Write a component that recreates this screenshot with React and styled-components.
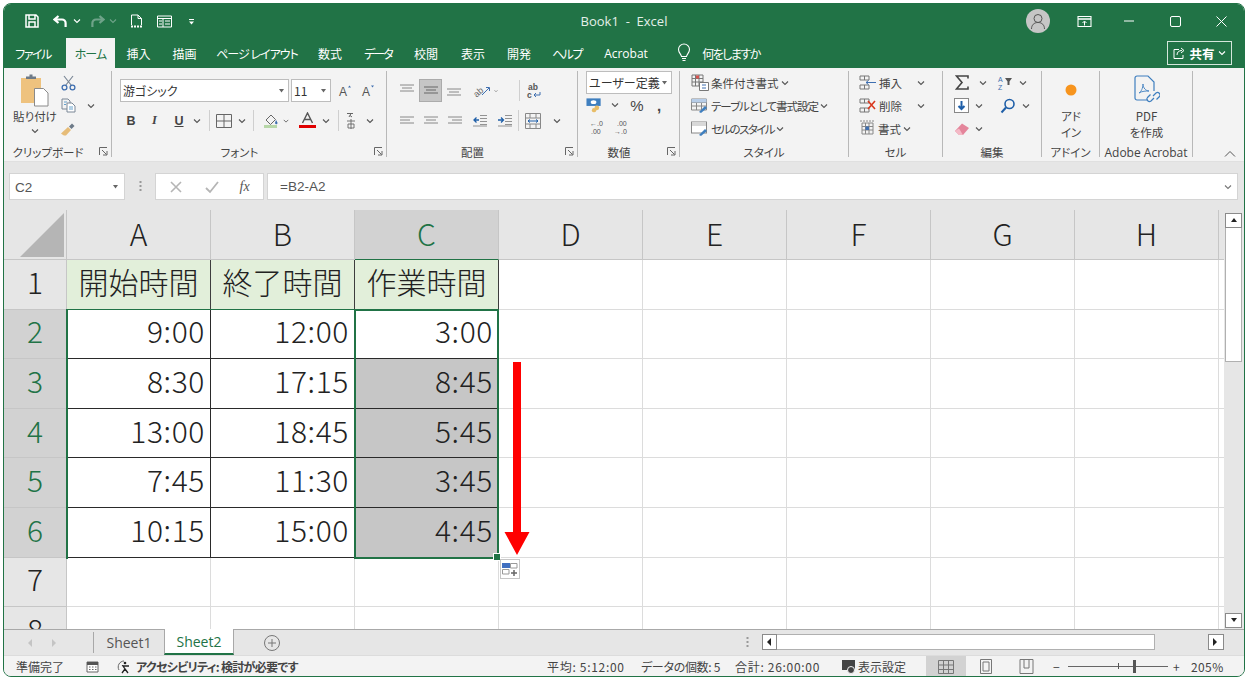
import { Fragment } from "react"
import styled, { createGlobalStyle } from "styled-components"

const GlobalStyle = createGlobalStyle`
  html, body { margin: 0; padding: 0; background: #fff; }
  * { box-sizing: border-box; }
  body { font-family: "Noto Sans CJK JP", "Noto Sans", sans-serif; font-feature-settings: "palt"; }
`

const Window = styled.div`
  width: 1242px;
  height: 674px;
  margin: 3px 0 0 3px;
  border: 1px solid #217346;
  border-radius: 8px;
  overflow: hidden;
  display: flex;
  flex-direction: column;
  background: #e6e6e6;
`

/* タイトルバー */
const TitleBar = styled.div`
  height: 34px;
  flex: none;
  background: #217346;
  color: #fff;
  display: flex;
  align-items: center;
  position: relative;
`
const Slot = styled.div`
  width: ${(p) => p.$w}px;
  flex: none;
  display: flex;
  align-items: center;
  justify-content: center;
`
const Title = styled.div`
  position: absolute;
  left: 0;
  right: 0;
  text-align: center;
  font-family: "Open Sans", sans-serif;
  font-size: 13px;
  color: #e4efe9;
  white-space: pre;
`
const Avatar = styled.div`
  width: 24px;
  height: 24px;
  border-radius: 50%;
  background: #c6c6c6;
  flex: none;
  display: flex;
  align-items: center;
  justify-content: center;
`

/* タブ */
const TabBar = styled.div`
  height: 30px;
  flex: none;
  background: #217346;
  display: flex;
  align-items: stretch;
`
const Tab = styled.div`
  width: ${(p) => p.$w}px;
  padding-right: ${(p) => p.$pr || 0}px;
  flex: none;
  display: flex;
  align-items: center;
  justify-content: center;
  font-size: 12px;
  letter-spacing: ${(p) => p.$ls || 0}px;
  white-space: nowrap;
  color: ${(p) => (p.$active ? "#217346" : "#fff")};
  background: ${(p) => (p.$active ? "#f3f3f3" : "transparent")};
  font-family: ${(p) => (p.$latin ? '"Open Sans", sans-serif' : "inherit")};
`
const Share = styled.div`
  width: 65px;
  height: 24px;
  margin: 3px 12px 0 auto;
  border: 1px solid #d5e6dc;
  display: flex;
  align-items: center;
  justify-content: center;
  gap: 3px;
  color: #fff;
  font-size: 12.5px;
  font-weight: 700;
`

/* リボン */
const Ribbon = styled.div`
  height: 94px;
  flex: none;
  background: #f3f3f3;
  display: flex;
  position: relative;
  padding-top: 3px;
  color: #444;
  border-bottom: 1px solid #e0e0e0;
`
const Group = styled.div`
  width: ${(p) => p.$w}px;
  flex: none;
  height: 86px;
  border-right: 1px solid #b8b8b8;
  display: flex;
  flex-direction: column;
  position: relative;
`
const GroupBody = styled.div`
  height: 73px;
  flex: none;
  padding-left: ${(p) => p.$pl || 0}px;
  display: flex;
  flex-direction: ${(p) => (p.$row ? "row" : "column")};
`
const GroupLabel = styled.div`
  flex: 1;
  display: flex;
  align-items: center;
  justify-content: center;
  font-size: ${(p) => (p.$latin ? 12 : 11.5)}px;
  color: #444;
  white-space: nowrap;
  padding-right: ${(p) => p.$pr || 0}px;
  font-family: ${(p) => (p.$latin ? '"Open Sans", sans-serif' : "inherit")};
`
const Launcher = styled.svg`
  position: absolute;
  right: 3px;
  bottom: 1px;
`
const Row = styled.div`
  height: ${(p) => p.$h || 23}px;
  margin-top: ${(p) => p.$mt || 0}px;
  display: flex;
  align-items: center;
  flex: none;
`
const Col = styled.div`
  display: flex;
  flex-direction: column;
  align-items: center;
  width: ${(p) => p.$w}px;
  flex: none;
`
const Combo = styled.div`
  width: ${(p) => p.$w}px;
  height: ${(p) => p.$h || 23}px;
  flex: none;
  margin-right: ${(p) => p.$mr || 0}px;
  background: #fff;
  border: 1px solid #bdbdbd;
  display: flex;
  align-items: center;
  justify-content: space-between;
  padding: 0 3px 0 2px;
  font-size: 12px;
  color: #333;
  white-space: nowrap;
`
const Selected = styled.div`
  width: 23px;
  height: 23px;
  flex: none;
  background: #c6c6c6;
  border: 1px solid #ababab;
  display: flex;
  align-items: center;
  justify-content: center;
`
const VSep = styled.div`
  width: 1px;
  height: 21px;
  background: #cfcfcf;
  flex: none;
`
const Cmd = styled.div`
  display: flex;
  align-items: center;
  gap: 2px;
  font-size: 11.5px;
  letter-spacing: ${(p) => p.$ls || 0}px;
  color: #444;
  white-space: nowrap;
`
const Big = styled.div`
  font-size: 11.5px;
  line-height: 16px;
  text-align: center;
  color: #444;
  white-space: nowrap;
`
const Letter = styled.span`
  font-family: ${(p) => (p.$serif ? '"Liberation Serif", serif' : '"Liberation Sans", sans-serif')};
  font-weight: 700;
  font-style: ${(p) => (p.$serif ? "italic" : "normal")};
  text-decoration: ${(p) => (p.$under ? "underline" : "none")};
  font-size: 12.5px;
  color: #444;
`
const Percent = styled.span`
  font-family: "Liberation Sans", sans-serif;
  font-size: 15px;
  font-weight: ${(p) => p.$b || 400};
  color: #444;
`
const Collapse = styled.svg`
  position: absolute;
  right: 8px;
  bottom: 3px;
`

/* 数式バー */
const FormulaArea = styled.div`
  height: 48px;
  flex: none;
  background: #e6e6e6;
  display: flex;
  align-items: flex-start;
  padding: 11px 6px 0 5px;
`
const NameBox = styled.div`
  width: 116px;
  height: 27px;
  flex: none;
  background: #fff;
  border: 1px solid #d4d4d4;
  display: flex;
  align-items: center;
  justify-content: space-between;
  padding: 1px 5px 0 5px;
  font-family: "Liberation Sans", sans-serif;
  font-size: 13.5px;
  color: #555;
`
const GripWrap = styled.div`
  width: 30px;
  height: 27px;
  flex: none;
  display: flex;
  align-items: center;
  justify-content: center;
`
const FxBox = styled.div`
  width: 109px;
  height: 27px;
  flex: none;
  margin-right: 3px;
  background: #fff;
  border: 1px solid #d4d4d4;
  display: flex;
  align-items: center;
  justify-content: space-around;
  padding: 0 3px;
`
const Fx = styled.span`
  font-family: "Liberation Serif", serif;
  font-style: italic;
  font-size: 14px;
  color: #555;
`
const FormulaInput = styled.div`
  flex: 1;
  height: 27px;
  background: #fff;
  border: 1px solid #d4d4d4;
  display: flex;
  align-items: center;
  justify-content: space-between;
  padding: 0 5px 0 12px;
  font-family: "Liberation Sans", sans-serif;
  font-size: 13.5px;
  color: #555;
`

/* シート */
const SheetArea = styled.div`
  height: 419px;
  flex: none;
  display: flex;
  background: #fff;
`
const Sheet = styled.div`
  width: 1220px;
  flex: none;
  position: relative;
  overflow: hidden;
  display: grid;
  grid-template-columns: 63px repeat(9, 144px);
  grid-template-rows: 50px repeat(8, 49.6px);
  align-content: start;
  font-family: "Noto Sans CJK JP", sans-serif;
  font-feature-settings: normal;
  font-weight: 300;
`
const Corner = styled.div`
  background: #e6e6e6;
  border-right: 1px solid #c6c6c6;
  border-bottom: 1px solid #c6c6c6;
  display: flex;
  align-items: flex-end;
  justify-content: flex-end;
  padding: 0 2px 2px 0;
`
const ColHead = styled.div`
  background: ${(p) => (p.$on ? "#d2d2d2" : "#e6e6e6")};
  color: ${(p) => (p.$on ? "#217346" : "#222")};
  border-right: 1px solid #c6c6c6;
  border-bottom: 1px solid ${(p) => (p.$on ? "#217346" : "#c6c6c6")};
  display: flex;
  align-items: center;
  justify-content: center;
  padding-bottom: 4px;
  font-size: 30px;
`
const RowHead = styled.div`
  background: ${(p) => (p.$on ? "#d2d2d2" : "#e6e6e6")};
  color: ${(p) => (p.$on ? "#217346" : "#222")};
  border-right: 1px solid ${(p) => (p.$on ? "#217346" : "#c6c6c6")};
  border-bottom: 1px solid #c6c6c6;
  display: flex;
  align-items: center;
  justify-content: center;
  padding-bottom: 7px;
  font-size: 30px;
`
const Cell = styled.div`
  background: ${(p) => p.$bg || "#fff"};
  border-right: 1px solid ${(p) => p.$line || "#dcdcdc"};
  border-bottom: 1px solid ${(p) => p.$line || "#dcdcdc"};
  display: flex;
  align-items: center;
  justify-content: ${(p) => (p.$center ? "center" : "flex-end")};
  padding: 0 ${(p) => (p.$center ? 0 : 5)}px 7px 0;
  font-size: 30px;
  letter-spacing: ${(p) => (p.$center ? 0 : 0.6)}px;
  color: #222;
  white-space: nowrap;
`
const SelectBox = styled.div`
  position: absolute;
  left: 350px;
  top: 99px;
  width: 145px;
  height: 250px;
  border: 2px solid #217346;
  pointer-events: none;
`
const BlockEdge = styled.div`
  position: absolute;
  left: 62px;
  top: 99px;
  width: 289px;
  height: 250px;
  border-left: 2px solid #217346;
  border-top: 1px solid #217346;
  pointer-events: none;
`
const Handle = styled.div`
  position: absolute;
  right: -4px;
  bottom: -4px;
  width: 6px;
  height: 6px;
  background: #217346;
  border: 1px solid #fff;
  box-sizing: content-box;
`
const Arrow = styled.svg`
  position: absolute;
  left: 500px;
  top: 152px;
`
const PasteOpt = styled.div`
  position: absolute;
  left: 496px;
  top: 349px;
  width: 20px;
  height: 20px;
  background: #fff;
  border: 1px solid #c6c6c6;
  display: flex;
  align-items: center;
  justify-content: center;
`

/* スクロールバー */
const VScroll = styled.div`
  width: 20px;
  flex: none;
  background: #e6e6e6;
  padding: 3px 2px 1px 1px;
  display: flex;
  flex-direction: column;
`
const ScrollBtn = styled.div`
  height: ${(p) => p.$s || 15}px;
  width: ${(p) => p.$w || "auto"};
  flex: none;
  background: #fff;
  border: 1px solid #8a8a8a;
  display: flex;
  align-items: center;
  justify-content: center;
`
const VThumb = styled.div`
  height: 134px;
  flex: none;
  background: #fff;
  border: 1px solid #b0b0b0;
  border-top: none;
`
const Fill = styled.div`
  flex: 1;
`

/* シートタブ */
const TabRow = styled.div`
  height: 26px;
  flex: none;
  background: #e6e6e6;
  border-top: 1px solid #a8a8a8;
  display: flex;
  align-items: stretch;
`
const NavArrows = styled.div`
  width: 90px;
  flex: none;
  display: flex;
  align-items: center;
  justify-content: center;
  gap: 18px;
  padding-right: 14px;
  border-right: 1px solid #a8a8a8;
  margin: 2px 0;
`
const SheetTab = styled.div`
  width: 70px;
  flex: none;
  margin-top: ${(p) => (p.$on ? "-1px" : 0)};
  display: flex;
  align-items: center;
  justify-content: center;
  font-family: "Open Sans", sans-serif;
  font-size: 14px;
  background: ${(p) => (p.$on ? "#fff" : "transparent")};
  color: ${(p) => (p.$on ? "#217346" : "#555")};
  border-bottom: ${(p) => (p.$on ? "2px solid #217346" : "none")};
  border-left: ${(p) => (p.$on ? "1px solid #a8a8a8" : "none")};
  border-right: ${(p) => (p.$on ? "1px solid #a8a8a8" : "none")};
`
const AddSheet = styled.div`
  width: 76px;
  flex: none;
  display: flex;
  align-items: center;
  justify-content: center;
`
const HGrip = styled.div`
  width: 18px;
  margin-left: 428px;
  flex: none;
  display: flex;
  align-items: center;
  justify-content: center;
`
const HScroll = styled.div`
  width: 462px;
  height: 16px;
  margin: 4px 0 0 6px;
  flex: none;
  display: flex;
`
const HThumb = styled.div`
  width: 378px;
  background: #fff;
  border: 1px solid #b0b0b0;
  border-left: none;
`

/* ステータスバー */
const StatusBar = styled.div`
  flex: 1;
  background: #f3f3f3;
  border-top: 1px solid #dcdcdc;
  display: flex;
  align-items: center;
  font-size: 12px;
  color: #444;
`
const StatusText = styled.div`
  width: ${(p) => p.$w}px;
  flex: none;
  white-space: nowrap;
  font-weight: ${(p) => p.$b || 400};
  letter-spacing: ${(p) => p.$ls || 0}px;
  margin-left: ${(p) => p.$ml || 0}px;
  display: flex;
  align-items: center;
  gap: 2px;
`
const ViewBtn = styled.div`
  width: 40px;
  height: 21px;
  flex: none;
  display: flex;
  align-items: center;
  justify-content: center;
  background: ${(p) => (p.$on ? "#d2d2d2" : "transparent")};
`
const Zoom = styled.div`
  width: 100px;
  height: 1px;
  margin: 0 5px;
  flex: none;
  background: #666;
  position: relative;
`
const ZoomTick = styled.div`
  position: absolute;
  left: ${(p) => p.$l}px;
  top: ${(p) => -p.$h / 2}px;
  width: ${(p) => p.$wd}px;
  height: ${(p) => p.$h}px;
  background: #555;
`

/* アイコン */
const Chev = ({ c = "#555" }) => (
  <svg width="8" height="6" viewBox="0 0 8 6"><path d="M1 1.5l3 3 3-3" fill="none" stroke={c} strokeWidth="1.1" /></svg>
)
const Tri = ({ c = "#666" }) => (
  <svg width="7" height="4" viewBox="0 0 7 4"><path d="M1 0h5L3.500 3.500z" fill={c} /></svg>
)
const I = ({ w = 16, h = 16, children }) => (
  <svg width={w} height={h} viewBox={`0 0 ${w} ${h}`} fill="none">{children}</svg>
)
const LauncherIcon = () => (
  <Launcher width="9" height="9" viewBox="0 0 9 9" fill="none">
    <path d="M.5 8V.5H8M3 3l4.500 4.500M4 8h4V4" stroke="#666" />
  </Launcher>
)
const SaveIcon = () => (
  <I w={14} h={14}><path d="M1 1h10l2 2v10H1zM4 1v4h6V1M4 13V8h6v5" stroke="#fff" strokeWidth="1.5" /></I>
)
const UndoIcon = () => (
  <I w={15} h={13}><path d="M5.500 1L1.500 4.500 5.500 8M2 4.500h7a3.600 3.600 0 0 1 3.600 3.600V12" stroke="#fff" strokeWidth="2.2" /></I>
)
const RedoIcon = () => (
  <I w={15} h={13}><path d="M9.500 1l4 3.500-4 3.500M13 4.500H6a3.600 3.600 0 0 0-3.600 3.600V12" stroke="#6fa389" strokeWidth="2.2" /></I>
)
const NewDocIcon = () => (
  <I w={13} h={15}><path d="M1.500 1h6.500l3.500 3.500V11M1.500 1v10M8 1v3.500h3.500" stroke="#fff" /><path d="M1 12.500h11" stroke="#fff" strokeWidth="2" strokeDasharray="2 1" /></I>
)
const FormIcon = () => (
  <I w={15} h={13}><path d="M.5 1h14v11H.5zM.5 3.500h14M6 3.500V12M2 6h3M2 9h3M8 6h5M8 9h5" stroke="#fff" /></I>
)
const QatIcon = () => (
  <I w={7} h={7}><path d="M1 1.500h5" stroke="#fff" /><path d="M1 3.500h5L3.500 6.500z" fill="#fff" /></I>
)
const PersonIcon = () => (
  <I w={16} h={17}><circle cx="8" cy="5.500" r="4" stroke="#555" /><path d="M1.500 16c0-4 2.500-6.500 6.500-6.500s6.500 2.500 6.500 6.500" stroke="#555" /></I>
)
const DisplayIcon = () => (
  <I w={15} h={13}><path d="M1 1.500h13v10H1z" stroke="#fff" strokeWidth="1.100" /><path d="M1 4h13" stroke="#fff" strokeWidth="1.500" /><path d="M7.500 10.500V6.500M5.500 8l2-2 2 2" stroke="#fff" /></I>
)
const MinIcon = () => <I w={12} h={4}><path d="M1 2h10" stroke="#fff" /></I>
const MaxIcon = () => <I w={11} h={11}><rect x=".5" y=".5" width="10" height="10" rx="1.500" stroke="#fff" /></I>
const CloseIcon = () => <I w={11} h={11}><path d="M.5.500l10 10M10.500.500l-10 10" stroke="#fff" /></I>
const BulbIcon = () => (
  <I w={14} h={20}><path d="M4.500 13.500C4 11 1.500 9.500 1.500 6.500a5.500 5.500 0 0 1 11 0c0 3-2.500 4.500-3 7z" stroke="#fff" strokeWidth="1.100" /><path d="M5 15.500h4M5.500 17.500h3" stroke="#fff" /></I>
)
const ShareIcon = () => (
  <I w={13} h={12}><path d="M6 2.500H1v9h9V8" stroke="#fff" /><path d="M4 8c0-3 2-4.500 5-4.500M8 1l3 2.500L8 6" stroke="#fff" /></I>
)
const PasteIcon = () => (
  <I w={30} h={34}>
    <rect x="1" y="4" width="20" height="25" fill="#eec27e" />
    <path d="M6 5V2.500h3.500V.5h3v2H16V5z" fill="#6d7a88" />
    <path d="M14.500 14.500h9l4.500 4.500v13H14.500z" fill="#fff" stroke="#8a8a8a" />
  </I>
)
const ScissorsIcon = () => (
  <I w={15} h={16}><path d="M3 1l7.500 9.500M12 1L4.500 10.500" stroke="#7a8796" strokeWidth="1.200" /><circle cx="3.500" cy="12.500" r="2.400" stroke="#3f6fb0" strokeWidth="1.300" /><circle cx="11.500" cy="12.500" r="2.400" stroke="#3f6fb0" strokeWidth="1.300" /></I>
)
const CopyIcon = () => (
  <I w={15} h={15}><path d="M1 1h6l2 2v8H1z" fill="#f3f3f3" stroke="#7a8796" /><path d="M6 5h5l3 3v6H6z" fill="#fff" stroke="#7a8796" /><path d="M3 4h3M3 6.500h2M8 9h4M8 11h4" stroke="#3f8ac0" strokeWidth=".8" /></I>
)
const BrushIcon = () => (
  <I w={16} h={14}><path d="M1 11.500L8 5l3 3-5 5.500c-2 .3-3.500-.5-5-2z" fill="#e6bc78" /><path d="M9 4.500l3-3 2.500 2.500-3 3z" fill="#6d7a88" /></I>
)
const GrowFont = ({ up }) => (
  <I w={14} h={18}>
    <text x="1" y="14" fontSize="12" fontFamily="Liberation Sans" fill="#555">A</text>
    <path d={up ? "M10 5.500l1.500-2 1.500 2z" : "M10 3.500h3L11.500 5.500z"} fill="#3f6fb0" />
  </I>
)
const BorderIcon = () => (
  <I w={16} h={14}><path d="M.5.500h15v13H.5zM8 .500v13M.5 7h15" stroke="#666" /></I>
)
const FillIcon = () => (
  <I w={16} h={17}><path d="M3 8l5-5 4.500 4.500-5 5z" stroke="#666" /><path d="M13 8c1 1.500 1.500 2.500 1.500 3a1.200 1.200 0 0 1-2.400 0c0-.5.400-1.500.900-3z" fill="#3f6fb0" /><path d="M1 14.500h13" stroke="#b7d7a8" strokeWidth="3" /></I>
)
const FontColor = () => (
  <I w={17} h={17}><path d="M3.500 11L8.500 1l5 10M5.500 7.500h6" stroke="#555" strokeWidth="1.400" /><path d="M0 14.500h17" stroke="#e00000" strokeWidth="3" /></I>
)
const RubyIcon = () => (
  <I w={12} h={18}><path d="M2 1.500h6M6 1.500L4 5M5 3.500l2 1.500" stroke="#666" /><path d="M2 9h8M6 7v10M3 12h6v4H3z" stroke="#666" strokeWidth=".9" /></I>
)
const AlignLines = ({ y = 0, a = "center", dark }) => {
  const wide = [2, 16]
  const short = a === "left" ? [2, 12] : a === "right" ? [6, 16] : [4, 14]
  const s = dark ? "#666" : "#888"
  return (
    <I w={18} h={14}>
      {[0, 1, 2].map((k) => {
        const p = k === 1 ? short : wide
        return <path key={k} d={`M${p[0]} ${3 + y + k * 3}H${p[1]}`} stroke={s} />
      })}
    </I>
  )
}
const OrientIcon = () => (
  <I w={20} h={20}><text x="2" y="14" fontSize="9" fontFamily="Liberation Sans" fill="#666" transform="rotate(-40 7 12)">ab</text><path d="M10 14l7-7M14 6.500h3.500V10" stroke="#3f6fb0" /></I>
)
const WrapIcon = () => (
  <I w={16} h={20}><text x="2" y="9" fontSize="8.500" fontWeight="700" fontFamily="Liberation Sans" fill="#555">ab</text><text x="1" y="17" fontSize="8.500" fontWeight="700" fontFamily="Liberation Sans" fill="#555">c</text><path d="M14 11v3H8M10 12l-2 2 2 2" stroke="#3f6fb0" /></I>
)
const IndentIcon = ({ flip }) => (
  <I w={16} h={13}>
    <path d="M8 1.500h7M8 4.500h7M8 7.500h7M8 10.500h7M1 12h14" stroke="#888" strokeWidth=".9" />
    <path d={flip ? "M1 6h5M4 3.500L6.500 6 4 8.500" : "M7 6H2M4.500 3.500L2 6l2.500 2.500"} stroke="#1f5fa8" strokeWidth="1.300" />
  </I>
)
const MergeIcon = () => (
  <I w={16} h={16}><path d="M.5.500h15v15H.5zM.5 5h15M.5 11h15M5 .500V5M11 .500V5M5 11v4.500M11 11v4.500" stroke="#888" /><path d="M3 8h10M5 6.500L3 8l2 1.500M11 6.500L13 8l-2 1.500" stroke="#1f5fa8" /></I>
)
const CurrencyIcon = () => (
  <I w={18} h={16}><rect x=".5" y="1" width="15" height="8" fill="#3f7fbf" /><ellipse cx="8" cy="5" rx="3" ry="2" fill="#fff" /><circle cx="11.500" cy="11" r="2.500" fill="#e8bd68" /><circle cx="8.500" cy="13.500" r="2.300" fill="#e8bd68" /></I>
)
const DecIcon = ({ more }) => (
  <I w={18} h={18}>
    <text x={more ? 2 : 5} y="7" fontSize="7" fontFamily="Liberation Sans" fill="#555">{more ? "←.0" : ".00"}</text>
    <text x={more ? 3 : 2} y="15" fontSize="7" fontFamily="Liberation Sans" fill="#555">{more ? ".00" : "→.0"}</text>
  </I>
)
const CondIcon = () => (
  <I w={18} h={17}><path d="M1 1h11v11H1zM1 4.500h11M1 8h11M4.500 1v11M8 1v11" stroke="#777" /><path d="M5 1.500h3v3H5z" fill="#d9534f" /><path d="M8.500 8.500h9v8h-9z" fill="#fff" stroke="#777" /><path d="M11 11h4M11 14h4" stroke="#3f6fb0" /></I>
)
const TableIcon = () => (
  <I w={18} h={16}><path d="M.5 1h15v11H.5zM.5 4.500h15M.5 8h15M5.500 1v11M10.500 1v11" stroke="#888" /><path d="M.5 1h15v3.500H.5z" fill="#b7cde8" /><path d="M8 14l6-6 2 2-6 5z" fill="#3f7fbf" /></I>
)
const CellStyleIcon = () => (
  <I w={18} h={16}><rect x=".5" y="1" width="15" height="11" fill="#fff" stroke="#888" /><path d="M1 1h14v4H1z" fill="#d8d8d8" /><path d="M8 14l6-6 2 2-6 5z" fill="#3f7fbf" /></I>
)
const InsertIcon = () => (
  <I w={18} h={15}><path d="M1 1h9v4H1zM1 10h9v4H1zM5.500 1v4M5.500 10v4" stroke="#777" /><path d="M17 7.500H7M9.500 5.500l-2.500 2 2.500 2" stroke="#3f6fb0" /></I>
)
const DeleteIcon = () => (
  <I w={18} h={15}><path d="M1 1h9v4H1zM1 10h9v4H1zM5.500 1v4M5.500 10v4" stroke="#777" /><path d="M9 3l7 8M16 3l-7 8" stroke="#d9381e" strokeWidth="1.600" /></I>
)
const FormatIcon = () => (
  <I w={17} h={17}><path d="M3 3h11v11H3zM3 6.500h11M3 10h11M6.500 3v11M10 3v11" stroke="#888" /><path d="M6.500 6.500H10V10H6.500z" fill="#3f6fb0" /><path d="M1 1h15" stroke="#888" strokeDasharray="2 1" /></I>
)
const FillDown = () => (
  <I w={16} h={15}><rect x=".5" y=".5" width="14" height="14" fill="#fff" stroke="#888" /><path d="M7.500 3v8M4.500 8l3 3 3-3" stroke="#1f5fa8" strokeWidth="2" /></I>
)
const SigmaIcon = () => (
  <I w={14} h={15}><path d="M13 3.500V1H1.500L7 7.500 1.500 14H13v-2.500" stroke="#444" strokeWidth="1.600" /></I>
)
const SortIcon = () => (
  <I w={16} h={18}><text x="1" y="8" fontSize="7" fontFamily="Liberation Sans" fill="#3f6fb0">A</text><text x="1" y="16" fontSize="7" fontFamily="Liberation Sans" fill="#3f6fb0">Z</text><path d="M8 4h7l-2.500 3.500V11h-2V7.500z" fill="#555" /></I>
)
const SearchIcon = () => (
  <I w={16} h={16}><circle cx="9.500" cy="6" r="4.500" stroke="#1f5fa8" strokeWidth="1.600" /><path d="M6 9.500l-4.500 5" stroke="#1f5fa8" strokeWidth="2" /></I>
)
const EraserIcon = () => (
  <I w={16} h={14}><path d="M1 9l7-7.500 7 4.500-6 7H5z" fill="#e4859b" /><path d="M1 9l4 4h4L5 6.500z" fill="#f4b9c6" /></I>
)
const AcrobatIcon = () => (
  <I w={26} h={32}>
    <path d="M14 25H3a2 2 0 0 1-2-2V3a2 2 0 0 1 2-2h11l6 6v9" stroke="#3f7fbf" strokeWidth="1.200" />
    <path d="M5 18c2-1 4-5 4-9 0 4 3 7 6 7-3 0-7 0-10 2z" stroke="#3f7fbf" strokeWidth=".9" />
    <path d="M19 21l3-3a2.500 2.500 0 0 1 3.500 3.500l-3 3M20 23l-3 3a2.500 2.500 0 0 1-3.500-3.500l3-3" stroke="#3f7fbf" strokeWidth="1.200" />
  </I>
)
const CornerIcon = () => (
  <svg width="44" height="44" viewBox="0 0 44 44"><path d="M44 0v44H0z" fill="#b5b5b5" /></svg>
)
const ThinX = () => <I w={14} h={14}><path d="M2 2l10 10M12 2L2 12" stroke="#b5b5b5" strokeWidth="1.600" /></I>
const Check = () => <I w={15} h={14}><path d="M2 8l4 4 8-10" stroke="#b5b5b5" strokeWidth="1.800" /></I>
const Grip = () => (
  <svg width="3" height="13" viewBox="0 0 3 13"><path d="M1.500 1v11" stroke="#999" strokeWidth="2" strokeDasharray="2 2" /></svg>
)
const SmallTri = ({ dir }) => {
  const d = { up: "M1 5l3-4 3 4z", down: "M1 1l3 4 3-4z", left: "M5 0L1 4l4 4z", right: "M1 0l4 4-4 4z" }[dir]
  return <svg width="8" height="8" viewBox="0 0 8 8"><path d={d} fill="#222" /></svg>
}
const MacroIcon = () => (
  <I w={13} h={13}><path d="M1 2h11v10H1z" fill="#fff" stroke="#666" /><path d="M1 2h11v3H1z" fill="#555" /><path d="M3 7h1.500M6 7h1.500M9 7h1.500M3 9.500h1.500M6 9.500h1.500M9 9.500h1.500" stroke="#666" /></I>
)
const AccessIcon = () => (
  <I w={18} h={16}><path d="M8 2a6 6 0 0 0-5 9" stroke="#666" /><path d="M11 7c-2 0-4 0-5-.5M7 7l2 3-3 4M9 10l3 4M13 7l-2 0" stroke="#222" strokeWidth="1.300" /><circle cx="9" cy="4" r="1.300" fill="#222" /></I>
)
const ViewSetIcon = () => (
  <I w={14} h={14}><rect x="0" y="0" width="13" height="10" fill="#444" /><circle cx="9" cy="10" r="3.500" fill="#444" stroke="#f3f3f3" /></I>
)
const GridIcon = () => <I w={16} h={14}><path d="M.5.500h15v13H.5zM5.500.500v13M10.500.500v13M.5 5h15M.5 9.500h15" stroke="#777" /></I>
const PageIcon = () => <I w={14} h={15}><path d="M1.500.500h11v14h-11zM4 3h6v9H4z" stroke="#777" /></I>
const BreakIcon = () => <I w={15} h={15}><path d="M1 .500h13v14H1zM5 .500V9h5V.500" stroke="#777" /></I>
const PlusCircle = () => <I w={18} h={18}><circle cx="9" cy="9" r="7.500" stroke="#777" /><path d="M9 5v8M5 9h8" stroke="#777" /></I>
const PasteOptIcon = () => (
  <I w={16} h={15}><rect x="0" y="1" width="8" height="5" fill="#3f6fc0" /><path d="M8.500 1.500H15V6H8.500zM.5 7.500H7V12H.5z" stroke="#999" /><path d="M12 8v6M9 11h6" stroke="#666" strokeWidth="1.500" /></I>
)

const columns = ["A", "B", "C", "D", "E", "F", "G", "H", ""]
const rows = [
  ["9:00", "12:00", "3:00"],
  ["8:30", "17:15", "8:45"],
  ["13:00", "18:45", "5:45"],
  ["7:45", "11:30", "3:45"],
  ["10:15", "15:00", "4:45"],
]
const headers = ["開始時間", "終了時間", "作業時間"]
const blanks = Array.from({ length: 6 })

const App = () => (
  <>
    <GlobalStyle />
    <Window>
      <TitleBar>
        <Title>{"Book1  -  Excel"}</Title>
        <Slot $w={18} />
        <Slot $w={20}><SaveIcon /></Slot>
        <Slot $w={10} />
        <Slot $w={16}><UndoIcon /></Slot>
        <Slot $w={18}><Chev c="#fff" /></Slot>
        <Slot $w={22}><RedoIcon /></Slot>
        <Slot $w={10}><Chev c="#6fa389" /></Slot>
        <Slot $w={36}><NewDocIcon /></Slot>
        <Slot $w={20}><FormIcon /></Slot>
        <Slot $w={34}><QatIcon /></Slot>
        <Slot $w={818} />
        <Avatar><PersonIcon /></Avatar>
        <Slot $w={22} />
        <Slot $w={24}><DisplayIcon /></Slot>
        <Slot $w={21} />
        <Slot $w={24}><MinIcon /></Slot>
        <Slot $w={22} />
        <Slot $w={24}><MaxIcon /></Slot>
        <Slot $w={22} />
        <Slot $w={24}><CloseIcon /></Slot>
      </TitleBar>
      <TabBar>
        <Tab $w={62} $pr={4} $ls={-1.5}>ファイル</Tab>
        <Tab $w={49} $active $ls={-1}>ホーム</Tab>
        <Tab $w={47}>挿入</Tab>
        <Tab $w={45}>描画</Tab>
        <Tab $w={100} $ls={-1}>ページ レイアウト</Tab>
        <Tab $w={46}>数式</Tab>
        <Tab $w={50} $ls={-2}>データ</Tab>
        <Tab $w={46}>校閲</Tab>
        <Tab $w={48}>表示</Tab>
        <Tab $w={44}>開発</Tab>
        <Tab $w={52} $ls={-1.5}>ヘルプ</Tab>
        <Tab $w={66} $latin>Acrobat</Tab>
        <Tab $w={50}><BulbIcon /></Tab>
        <Tab $w={44} $ls={-1.5}>何をしますか</Tab>
        <Share><ShareIcon />共有<Chev c="#fff" /></Share>
      </TabBar>

      <Ribbon>
        <Group $w={108}>
          <GroupBody $row $pl={3}>
            <Col $w={56}>
              <Row $h={34} $mt={3}><PasteIcon /></Row>
              <Big>貼り付け</Big>
              <Row $h={14}><Chev /></Row>
            </Col>
            <Col $w={10}>
              <Row $h={23}><ScissorsIcon /></Row>
              <Row $h={23}><CopyIcon /></Row>
              <Row $h={23}><BrushIcon /></Row>
            </Col>
            <Col $w={36}>
              <Row $h={23} />
              <Row $h={23}><Chev /></Row>
            </Col>
          </GroupBody>
          <GroupLabel $pr={19}>クリップボード</GroupLabel>
          <LauncherIcon />
        </Group>

        <Group $w={275}>
          <GroupBody $pl={8}>
            <Row $h={23} $mt={8}>
              <Combo $w={169} $mr={2}>游ゴシック<Tri /></Combo>
              <Combo $w={40}>11<Tri /></Combo>
              <Slot $w={7} />
              <Slot $w={14}><GrowFont up /></Slot>
              <Slot $w={9} />
              <Slot $w={14}><GrowFont /></Slot>
            </Row>
            <Row $h={23} $mt={7}>
              <Slot $w={22}><Letter>B</Letter></Slot>
              <Slot $w={25}><Letter $serif>I</Letter></Slot>
              <Slot $w={24}><Letter $under>U</Letter></Slot>
              <Slot $w={12}><Chev /></Slot>
              <Slot $w={12}><VSep /></Slot>
              <Slot $w={18}><BorderIcon /></Slot>
              <Slot $w={18}><Chev /></Slot>
              <Slot $w={4}><VSep /></Slot>
              <Slot $w={4} />
              <Slot $w={24}><FillIcon /></Slot>
              <Slot $w={6}><Chev /></Slot>
              <Slot $w={6} />
              <Slot $w={24}><FontColor /></Slot>
              <Slot $w={14}><Chev /></Slot>
              <Slot $w={10}><VSep /></Slot>
              <Slot $w={1} />
              <Slot $w={14}><RubyIcon /></Slot>
              <Slot $w={24}><Chev /></Slot>
            </Row>
          </GroupBody>
          <GroupLabel $pr={19}>フォント</GroupLabel>
          <LauncherIcon />
        </Group>

        <Group $w={191}>
          <GroupBody $pl={8}>
            <Row $h={23} $mt={8}>
              <Slot $w={24}><AlignLines y={-2} /></Slot>
              <Selected><AlignLines dark /></Selected>
              <Slot $w={24}><AlignLines y={2} /></Slot>
              <Slot $w={4} />
              <Slot $w={24}><OrientIcon /></Slot>
              <Slot $w={4}><Chev /></Slot>
              <Slot $w={20} />
              <Slot $w={2}><VSep /></Slot>
              <Slot $w={6} />
              <Slot $w={16}><WrapIcon /></Slot>
            </Row>
            <Row $h={23} $mt={7}>
              <Slot $w={24}><AlignLines a="left" /></Slot>
              <Slot $w={24}><AlignLines /></Slot>
              <Slot $w={24}><AlignLines a="right" /></Slot>
              <Slot $w={26}><IndentIcon /></Slot>
              <Slot $w={23}><IndentIcon flip /></Slot>
              <Slot $w={4}><VSep /></Slot>
              <Slot $w={3} />
              <Slot $w={20}><MergeIcon /></Slot>
              <Slot $w={28}><Chev /></Slot>
            </Row>
          </GroupBody>
          <GroupLabel $pr={19}>配置</GroupLabel>
          <LauncherIcon />
        </Group>

        <Group $w={102}>
          <GroupBody $pl={8}>
            <Combo $w={86} $h={23}>ユーザー定義<Tri /></Combo>
            <Row $h={22}>
              <Slot $w={17}><CurrencyIcon /></Slot>
              <Slot $w={23}><Chev /></Slot>
              <Slot $w={22}><Percent>%</Percent></Slot>
              <Slot $w={22}><Percent $b={700}>,</Percent></Slot>
            </Row>
            <Row $h={23}>
              <Slot $w={22}><DecIcon more /></Slot>
              <Slot $w={25}><DecIcon /></Slot>
            </Row>
          </GroupBody>
          <GroupLabel $pr={19}>数値</GroupLabel>
          <LauncherIcon />
        </Group>

        <Group $w={169}>
          <GroupBody $pl={11}>
            <Row><Cmd><CondIcon />条件付き書式 <Chev /></Cmd></Row>
            <Row><Cmd $ls={-1}><TableIcon />テーブルとして書式設定 <Chev /></Cmd></Row>
            <Row><Cmd $ls={-1.6}><CellStyleIcon />セルのスタイル <Chev /></Cmd></Row>
          </GroupBody>
          <GroupLabel>スタイル</GroupLabel>
        </Group>

        <Group $w={94}>
          <GroupBody $pl={10}>
            <Row><Cmd><InsertIcon />挿入<Slot $w={34}><Chev /></Slot></Cmd></Row>
            <Row><Cmd><DeleteIcon />削除<Slot $w={34}><Chev /></Slot></Cmd></Row>
            <Row><Cmd><FormatIcon />書式 <Chev /></Cmd></Row>
          </GroupBody>
          <GroupLabel>セル</GroupLabel>
        </Group>

        <Group $w={99}>
          <GroupBody $pl={11}>
            <Row>
              <Slot $w={16}><SigmaIcon /></Slot>
              <Slot $w={26}><Chev /></Slot>
              <Slot $w={18}><SortIcon /></Slot>
              <Slot $w={18}><Chev /></Slot>
            </Row>
            <Row>
              <Slot $w={16}><FillDown /></Slot>
              <Slot $w={18}><Chev /></Slot>
              <Slot $w={8} />
              <Slot $w={24}><SearchIcon /></Slot>
              <Slot $w={12}><Chev /></Slot>
            </Row>
            <Row>
              <Slot $w={16}><EraserIcon /></Slot>
              <Slot $w={18}><Chev /></Slot>
            </Row>
          </GroupBody>
          <GroupLabel>編集</GroupLabel>
        </Group>

        <Group $w={58}>
          <GroupBody>
            <Col $w={58}>
              <Row $h={37}>
                <svg width="12" height="12" viewBox="0 0 12 12"><circle cx="6" cy="6" r="5.500" fill="#f7941d" /></svg>
              </Row>
              <Big>アド<br />イン</Big>
            </Col>
          </GroupBody>
          <GroupLabel>アドイン</GroupLabel>
        </Group>

        <Group $w={93}>
          <GroupBody>
            <Col $w={93}>
              <Row $h={35} $mt={2}><AcrobatIcon /></Row>
              <Big>PDF<br />を作成</Big>
            </Col>
          </GroupBody>
          <GroupLabel $latin>Adobe Acrobat</GroupLabel>
        </Group>

        <Collapse width="12" height="8" viewBox="0 0 12 8"><path d="M1 6.500l5-5 5 5" fill="none" stroke="#555" /></Collapse>
      </Ribbon>

      <FormulaArea>
        <NameBox>C2<Tri /></NameBox>
        <GripWrap><Grip /></GripWrap>
        <FxBox>
          <ThinX />
          <Check />
          <Fx>fx</Fx>
        </FxBox>
        <FormulaInput>=B2-A2<Chev c="#777" /></FormulaInput>
      </FormulaArea>

      <SheetArea>
        <Sheet>
          <Corner><CornerIcon /></Corner>
          {columns.map((c) => <ColHead key={c} $on={c === "C"}>{c}</ColHead>)}

          <RowHead>1</RowHead>
          {headers.map((h) => <Cell key={h} $center $bg="#e2efda" $line="#3d3d3d">{h}</Cell>)}
          {blanks.map((_, i) => <Cell key={i} />)}

          {rows.map((r, ri) => (
            <Fragment key={ri}>
              <RowHead $on>{ri + 2}</RowHead>
              {r.map((v, ci) => (
                <Cell key={ci} $line="#2a2a2a" $bg={ci === 2 && ri > 0 ? "#c6c6c6" : "#fff"}>{v}</Cell>
              ))}
              {blanks.map((_, i) => <Cell key={`b${i}`} />)}
            </Fragment>
          ))}

          <RowHead>7</RowHead>
          {columns.map((c) => <Cell key={c} />)}
          <RowHead>8</RowHead>
          {columns.map((c) => <Cell key={c} />)}

          <BlockEdge />
          <SelectBox><Handle /></SelectBox>
          <Arrow width="26" height="194" viewBox="0 0 26 194">
            <path d="M9 0h8v170h8.500L13 193 .5 170H9z" fill="#ff0000" />
          </Arrow>
          <PasteOpt><PasteOptIcon /></PasteOpt>
        </Sheet>
        <VScroll>
          <ScrollBtn><SmallTri dir="up" /></ScrollBtn>
          <VThumb />
          <Fill />
          <ScrollBtn><SmallTri dir="down" /></ScrollBtn>
        </VScroll>
      </SheetArea>

      <TabRow>
        <NavArrows>
          <svg width="6" height="8" viewBox="0 0 6 8"><path d="M5 0L1 4l4 4z" fill="#c4c4c4" /></svg>
          <svg width="6" height="8" viewBox="0 0 6 8"><path d="M1 0l4 4-4 4z" fill="#c4c4c4" /></svg>
        </NavArrows>
        <SheetTab>Sheet1</SheetTab>
        <SheetTab $on>Sheet2</SheetTab>
        <AddSheet><PlusCircle /></AddSheet>
        <HGrip><Grip /></HGrip>
        <HScroll>
          <ScrollBtn $s={16} $w="15px"><SmallTri dir="left" /></ScrollBtn>
          <HThumb />
          <Fill />
          <ScrollBtn $s={16} $w="16px"><SmallTri dir="right" /></ScrollBtn>
        </HScroll>
      </TabRow>

      <StatusBar>
        <StatusText $w={70} $ml={12}>準備完了</StatusText>
        <StatusText $w={30}><MacroIcon /></StatusText>
        <StatusText $w={431} $b={700} $ls={-0.7}><AccessIcon />アクセシビリティ: 検討が必要です</StatusText>
        <StatusText $w={94} $ls={0.7}>平均: 5:12:00</StatusText>
        <StatusText $w={94} $ls={-0.3}>データの個数: 5</StatusText>
        <StatusText $w={107} $ls={0.7}>合計: 26:00:00</StatusText>
        <StatusText $w={84}><ViewSetIcon />表示設定</StatusText>
        <ViewBtn $on><GridIcon /></ViewBtn>
        <ViewBtn><PageIcon /></ViewBtn>
        <ViewBtn><BreakIcon /></ViewBtn>
        <StatusText $w={10} $ml={7}>−</StatusText>
        <Zoom>
          <ZoomTick $l={50} $wd={1} $h={6} />
          <ZoomTick $l={65} $wd={3} $h={13} />
        </Zoom>
        <StatusText $w={18}>+</StatusText>
        <StatusText $w={40} $ls={0.4}>205%</StatusText>
      </StatusBar>
    </Window>
  </>
)

export default App
